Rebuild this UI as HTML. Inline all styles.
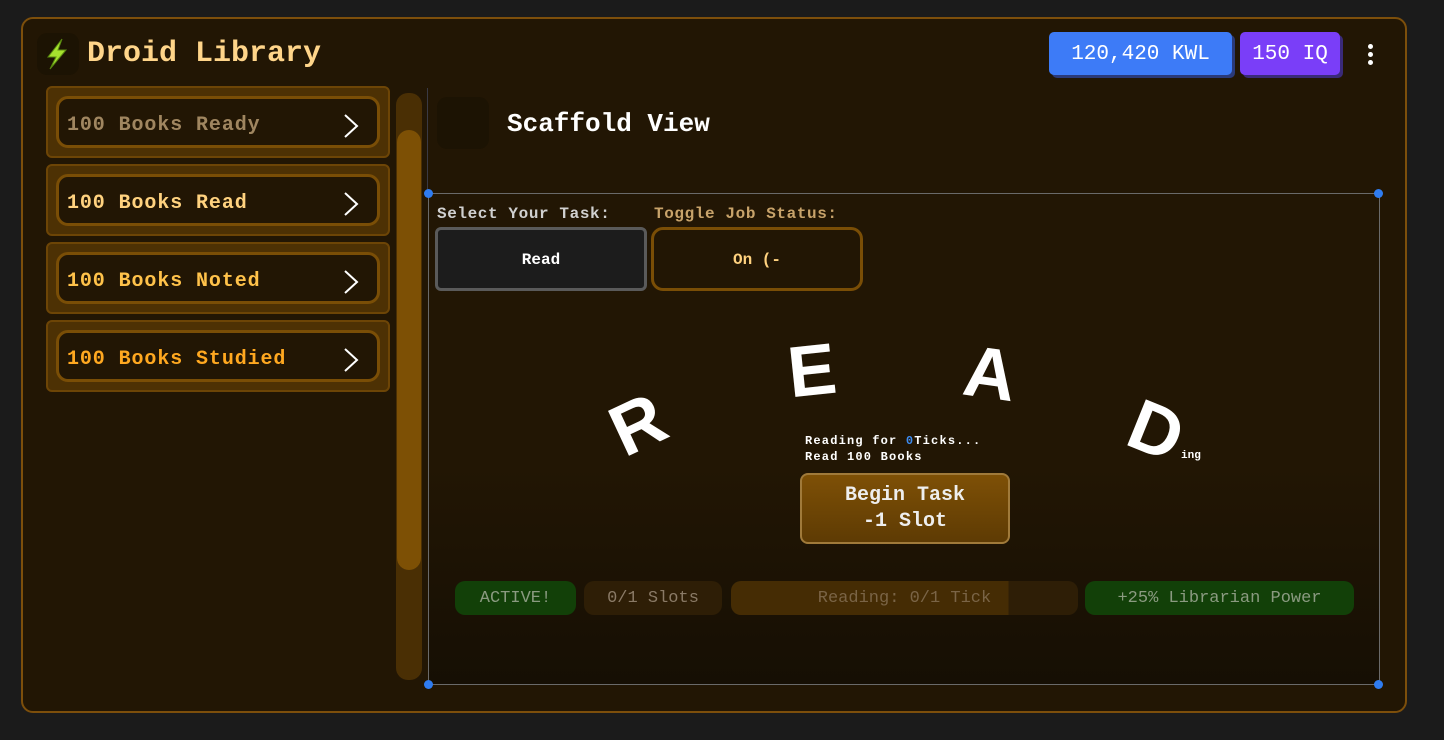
<!DOCTYPE html>
<html><head><meta charset="utf-8"><style>
*{margin:0;padding:0;box-sizing:border-box}
body{width:1444px;height:740px;background:#1b1b1b;font-family:"Liberation Mono",monospace;position:relative;overflow:hidden}
.a{position:absolute}
.panel{left:21px;top:17px;width:1386px;height:696px;background:#221604;border:2px solid #7d4f0b;border-radius:12px}
.item{position:absolute;left:46px;width:344px;height:72px;background:#4d3104;border:2px solid #6d4506;border-radius:6px}
.item .in{position:absolute;left:8px;top:8px;right:8px;bottom:8px;background:#221604;border:3px solid #7a4e06;border-radius:12px;font-weight:bold;font-size:20px;line-height:54px;padding-left:8px;letter-spacing:0.9px;color:#ffd27f}
.item .ch{position:absolute;right:18px;top:14px}
.L{position:absolute;color:#fff;font-family:"Liberation Sans",sans-serif;font-weight:bold;font-size:72px}
.pill{position:absolute;top:581px;height:34px;border-radius:10px;font-size:17px;line-height:36px;text-align:center;font-family:"Liberation Mono",monospace}
</style></head><body>
<div class="a panel"></div>
<div class="a" style="left:37px;top:33px;width:42px;height:42px;background:#1c1303;border-radius:10px"></div>
<svg class="a" style="left:42px;top:37px" width="30" height="34" viewBox="0 0 30 34"><path d="M20 2 L6 20 L14 20 L8 32 L24 13 L16 13 Z" fill="#a6e22e" stroke="#5a8a10" stroke-width="1"/></svg>
<div class="a" style="left:87px;top:37px;font-size:30px;font-weight:bold;color:#ffd58a">Droid Library</div>
<div class="a" style="left:1049px;top:32px;width:183px;height:43px;background:#3d7bf7;border-radius:5px;box-shadow:3px 3px 0 #2a3a7a;color:#fff;font-size:21px;line-height:46px;text-align:center">120,420 KWL</div>
<div class="a" style="left:1240px;top:32px;width:100px;height:43px;background:#7a3ef8;border-radius:5px;box-shadow:3px 3px 0 #3a2a7a;color:#fff;font-size:21px;line-height:46px;text-align:center">150 IQ</div>
<div class="a" style="left:1368px;top:44px;width:5px;height:5px;background:#fff;border-radius:50%;box-shadow:0 8px 0 #fff,0 16px 0 #fff"></div>

<div class="item" style="top:86px"><div class="in" style="color:#a08660">100 Books Ready<svg class="ch" width="16" height="26"><path d="M2 2 L14 13 L2 24" fill="none" stroke="#fff" stroke-width="2"/></svg></div></div>
<div class="item" style="top:164px"><div class="in">100 Books Read<svg class="ch" width="16" height="26"><path d="M2 2 L14 13 L2 24" fill="none" stroke="#fff" stroke-width="2"/></svg></div></div>
<div class="item" style="top:242px"><div class="in" style="color:#ffc24a">100 Books Noted<svg class="ch" width="16" height="26"><path d="M2 2 L14 13 L2 24" fill="none" stroke="#fff" stroke-width="2"/></svg></div></div>
<div class="item" style="top:320px"><div class="in" style="color:#ffa820">100 Books Studied<svg class="ch" width="16" height="26"><path d="M2 2 L14 13 L2 24" fill="none" stroke="#fff" stroke-width="2"/></svg></div></div>

<div class="a" style="left:396px;top:93px;width:26px;height:587px;background:#4a2f04;border-radius:12px"></div>
<div class="a" style="left:397px;top:130px;width:24px;height:440px;background:#7d5005;border-radius:12px"></div>
<div class="a" style="left:427px;top:88px;width:1px;height:105px;background:#3a3a44"></div>

<div class="a" style="left:437px;top:97px;width:52px;height:52px;background:#1c1303;border-radius:10px"></div>
<div class="a" style="left:507px;top:109px;font-size:26px;font-weight:bold;color:#fff">Scaffold View</div>

<div class="a" style="left:428px;top:193px;width:952px;height:492px;border:1px solid #6a6a6a;background:linear-gradient(#221604 55%,#160f04)"></div>
<div class="a" style="left:424px;top:189px;width:9px;height:9px;border-radius:50%;background:#2f7cf0"></div>
<div class="a" style="left:1374px;top:189px;width:9px;height:9px;border-radius:50%;background:#2f7cf0"></div>
<div class="a" style="left:424px;top:680px;width:9px;height:9px;border-radius:50%;background:#2f7cf0"></div>
<div class="a" style="left:1374px;top:680px;width:9px;height:9px;border-radius:50%;background:#2f7cf0"></div>

<div class="a" style="left:437px;top:205px;font-size:16px;font-weight:bold;color:#d0d0d0;letter-spacing:0.6px">Select Your Task:</div>
<div class="a" style="left:654px;top:205px;font-size:16px;font-weight:bold;color:#c8a36a;letter-spacing:0.6px">Toggle Job Status:</div>
<div class="a" style="left:435px;top:227px;width:212px;height:64px;background:#1c1c1c;border:3px solid #5a5a5a;border-radius:6px;color:#fff;font-size:16px;font-weight:bold;line-height:60px;text-align:center">Read</div>
<div class="a" style="left:651px;top:227px;width:212px;height:64px;background:#221604;border:3px solid #7a4e06;border-radius:12px;color:#ffd27f;font-size:16px;font-weight:bold;line-height:60px;text-align:center">On (-</div>

<div class="L" style="left:612px;top:384px;transform:rotate(-25deg)">R</div>
<div class="L" style="left:788px;top:330px;transform:rotate(-6deg)">E</div>
<div class="L" style="left:964px;top:333px;transform:rotate(8deg)">A</div>
<div class="L" style="left:1130px;top:390px;transform:rotate(22deg)">D</div>
<div class="a" style="left:1181px;top:450px;font-size:11px;color:#fff;font-weight:bold">ing</div>
<div class="a" style="left:805px;top:433px;font-size:12px;color:#fff;font-weight:bold;line-height:16px;letter-spacing:1.2px">Reading for <span style="color:#3d8bf0">0</span>Ticks...<br>Read 100 Books</div>

<div class="a" style="left:800px;top:473px;width:210px;height:71px;background:linear-gradient(#7e5006,#5e3b04);border:2px solid #a07a3a;border-radius:8px;color:#eee;font-size:20px;font-weight:bold;line-height:26px;text-align:center;padding-top:8px">Begin Task<br>-1 Slot</div>

<div class="pill" style="left:455px;width:121px;background:#124008;color:#8a9a80">ACTIVE!</div>
<div class="pill" style="left:584px;width:138px;background:#2e1e06;color:#8a7a66">0/1 Slots</div>
<div class="pill" style="left:731px;width:347px;background:linear-gradient(90deg,#452c04 0,#452c04 80%,#2e1e06 80%);color:#7a6446">Reading: 0/1 Tick</div>
<div class="pill" style="left:1085px;width:269px;background:#124008;color:#8a9a80">+25% Librarian Power</div>
</body></html>
